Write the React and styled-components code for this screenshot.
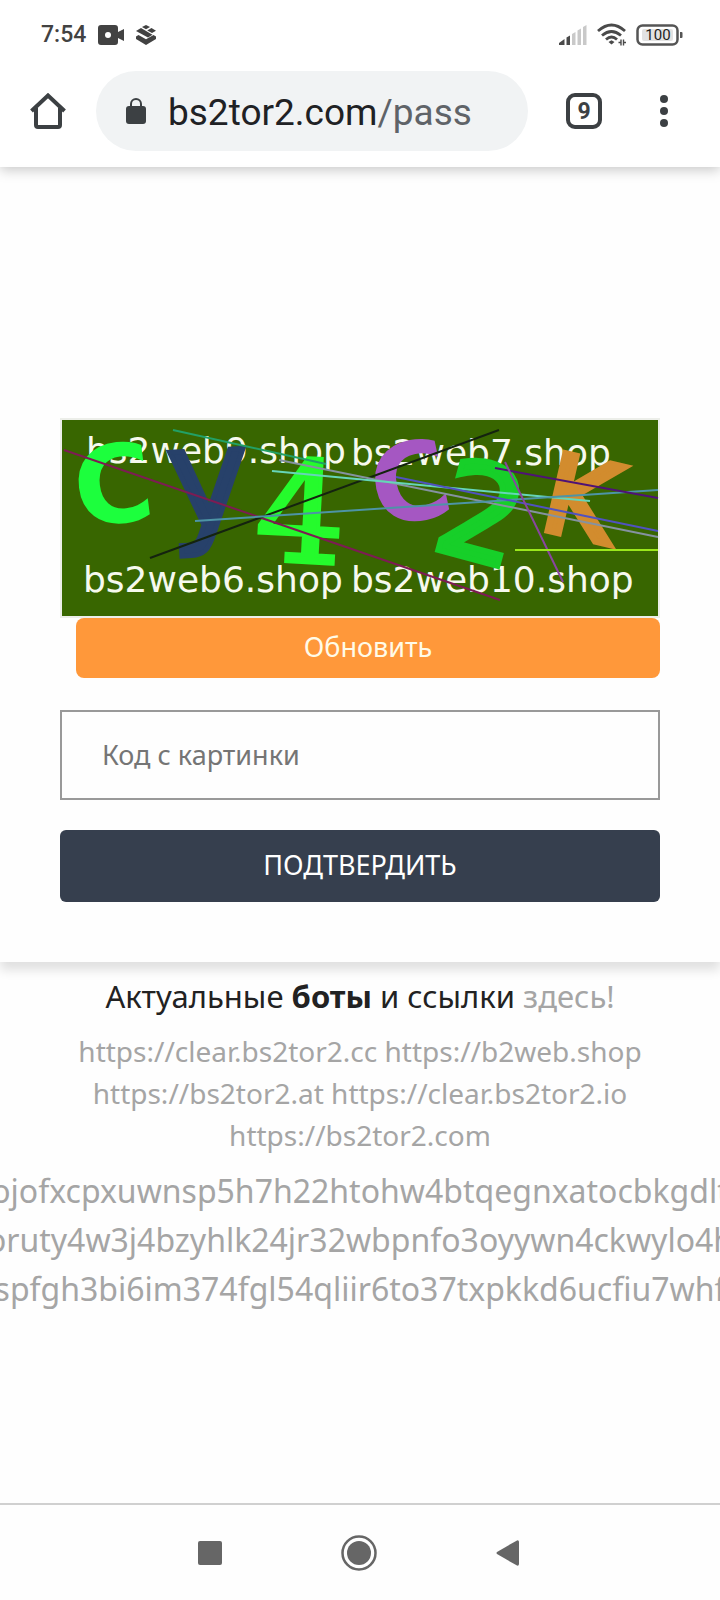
import React, { useState } from "react";
import styled, { createGlobalStyle } from "styled-components";

const GlobalStyle = createGlobalStyle`
	* {
		box-sizing: border-box;
	}

	body {
		margin: 0;
		background: #fefefe;
		color: #222;
		font-family: "Noto Sans", "Open Sans", sans-serif;
		overflow-x: hidden;
	}

	button {
		border: 0;
		padding: 0;
		background: none;
		font: inherit;
		cursor: pointer;
	}

	svg {
		display: block;
	}
`;

const Screen = styled.div`
	display: flex;
	flex-direction: column;
	min-height: 100vh;
	overflow: hidden;
`;

const Header = styled.header`
	background: #fff;
	box-shadow: 0 3px 12px rgba(0, 0, 0, 0.22);
	font-family: Roboto, sans-serif;
`;

const StatusBar = styled.div`
	display: flex;
	align-items: center;
	justify-content: space-between;
	height: 71px;
	padding: 0 37px 2px 41px;
	color: #424242;
`;

const StatusGroup = styled.div`
	display: flex;
	align-items: center;
	gap: ${(props) => props.$gap};
`;

const Clock = styled.time`
	font-size: 23px;
	font-weight: 500;
	line-height: 24px;
`;

const Toolbar = styled.div`
	display: flex;
	align-items: center;
	padding: 0 32px 16px 0;
	color: #3c4043;
`;

const ToolButton = styled.button`
	display: flex;
	align-items: center;
	justify-content: center;
	width: ${(props) => props.$width};
	height: ${(props) => props.$height || "80px"};
	color: inherit;
`;

const Address = styled.div`
	display: flex;
	flex: 1;
	align-items: center;
	gap: 22px;
	height: 80px;
	padding: 0 30px;
	border-radius: 40px;
	background: #f1f3f4;
	color: #202124;
	font-size: 37px;
	line-height: 44px;
	white-space: nowrap;
`;

const AddressText = styled.span`
	padding-top: 4px;
`;

const AddressPath = styled.span`
	color: #5f6368;
`;

const Card = styled.main`
	padding: 251px 60px 60px;
	box-shadow: 0 8px 10px rgba(0, 0, 0, 0.12);
`;

const Form = styled.form`
	display: flex;
	flex-direction: column;
`;

const CaptchaImage = styled.svg`
	width: 100%;
	height: auto;
`;

const RefreshButton = styled.button`
	height: 60px;
	margin-left: 16px;
	padding-bottom: 2px;
	border-radius: 8px;
	background: #ff983a;
	color: #fffbe8;
	font-size: 27px;
	line-height: 36px;
`;

const CodeInput = styled.input`
	width: 100%;
	height: 90px;
	margin: 32px 0 30px;
	padding: 0 40px 2px;
	border: 2px solid #999;
	border-radius: 0;
	background: transparent;
	color: #222;
	font-family: inherit;
	font-size: 27px;

	&::placeholder {
		color: #757575;
		opacity: 1;
	}
`;

const SubmitButton = styled.button`
	height: 72px;
	padding-bottom: 2px;
	border-radius: 6px;
	background: #363f4e;
	color: #fff;
	font-size: 27px;
	line-height: 36px;
	text-transform: uppercase;
`;

const Links = styled.section`
	text-align: center;
`;

const LinksTitle = styled.p`
	margin: 12px 0;
	font-size: 31px;
	line-height: 44px;
`;

const GreyLink = styled.a`
	color: #a5a5a5;
	text-decoration: none;
`;

const MirrorList = styled.p`
	margin: 0;
	padding: 0 60px;
	font-size: 28px;
	line-height: 42px;
`;

const OnionList = styled.div`
	display: flex;
	flex-direction: column;
	align-items: center;
	margin: 10px 0 60px;
	font-size: 32px;
	line-height: 49px;
	white-space: nowrap;
`;

const NavBar = styled.nav`
	display: flex;
	justify-content: center;
	height: 97px;
	margin-top: auto;
	padding-right: 3px;
	border-top: 2px solid #d0d0d0;
	color: #666;
`;

const mirrors = [
	"https://clear.bs2tor2.cc",
	"https://b2web.shop",
	"https://bs2tor2.at",
	"https://clear.bs2tor2.io",
	"https://bs2tor2.com",
];

const onions = [
	"ojofxcpxuwnsp5h7h22htohw4btqegnxatocbkgdlt",
	"oruty4w3j4bzyhlk24jr32wbpnfo3oyywn4ckwylo4h",
	"spfgh3bi6im374fgl54qliir6to37txpkkd6ucfiu7whf",
];

const captchaLetters = [
	{ char: "C", x: 53, y: 66, size: 108, turn: -7, base: 39, fill: "#1cff3d", weight: 700 },
	{ char: "y", x: 149, y: 85, size: 138, turn: -3, base: 23, fill: "#27416a", stroke: 5 },
	{ char: "4", x: 241, y: 93, size: 140, turn: 3, base: 51, fill: "#25fb2c", stroke: 4, serif: true },
	{ char: "C", x: 350, y: 64, size: 108, turn: -12, base: 39, fill: "#a557c2", weight: 700 },
	{ char: "2", x: 422, y: 94, size: 132, turn: 15, base: 48, fill: "#17cf29", stroke: 6 },
	{ char: "K", x: 521, y: 80, size: 108, turn: 13, base: 39, fill: "#d28c2e", stroke: 7 },
];

const captchaLines = [
	{ from: [4, 32], to: [440, 182], color: "#7d1c53" },
	{ from: [90, 140], to: [439, 12], color: "#14230f" },
	{ from: [113, 12], to: [266, 46], color: "#22a066" },
	{ from: [219, 42], to: [598, 119], color: "#8592a0" },
	{ from: [212, 53], to: [530, 83], color: "#66d5b8" },
	{ from: [135, 103], to: [598, 72], color: "#4d94a6" },
	{ from: [336, 59], to: [598, 113], color: "#5052c0" },
	{ from: [435, 50], to: [598, 80], color: "#4f1276" },
	{ from: [445, 44], to: [503, 164], color: "#8a45a0" },
	{ from: [455, 132], to: [598, 132], color: "#9be81c" },
];

const Captcha = () => (
	<CaptchaImage viewBox="0 0 600 200" role="img" aria-label="Код">
		<rect width="600" height="200" fill="#eceee9" />
		<rect x="2" y="2" width="596" height="196" fill="#386600" />
		<g fill="#f6f9ee" fontFamily="DejaVu Sans" fontSize="36">
			<text x="26" y="45">bs2web9.shop</text>
			<text x="291" y="47">bs2web7.shop</text>
			<text x="23" y="174">bs2web6.shop</text>
			<text x="291" y="174">bs2web10.shop</text>
		</g>
		{captchaLetters.map((letter, index) => (
			<text
				key={index}
				x="0"
				y={letter.base}
				transform={`translate(${letter.x} ${letter.y}) rotate(${letter.turn})`}
				textAnchor="middle"
				fontFamily={letter.serif ? "DejaVu Serif" : "DejaVu Sans"}
				fontSize={letter.size}
				fontWeight={letter.weight || 400}
				fill={letter.fill}
				stroke={letter.fill}
				strokeWidth={letter.stroke || 0}
			>
				{letter.char}
			</text>
		))}
		{captchaLines.map(({ from, to, color }) => (
			<line
				key={color}
				x1={from[0]}
				y1={from[1]}
				x2={to[0]}
				y2={to[1]}
				stroke={color}
				strokeWidth="2"
			/>
		))}
	</CaptchaImage>
);

const CameraIcon = () => (
	<svg width="26" height="20" viewBox="0 0 26 20" fill="currentColor">
		<path d="M3 0h14a3 3 0 0 1 3 3v4l6-3v12l-6-3v4a3 3 0 0 1-3 3H3a3 3 0 0 1-3-3V3a3 3 0 0 1 3-3z" />
		<circle cx="10" cy="10" r="3" fill="#fff" />
	</svg>
);

const LayersIcon = () => (
	<svg width="20" height="20" viewBox="0 0 20 20" fill="currentColor">
		<path d="M10 0l4 2-4 2.200-4-2.200zM15.500 3l4.500 2.800-4 2.200-4.800-2.600z" />
		<path d="M5 3l11.500 6.800-4.500 2.700L0 6z" />
		<path d="M0 11.500l2.500-1.500 7.500 4.300 7.500-4.300 2.500 1.500V14l-10 6-10-6z" />
	</svg>
);

const SignalIcon = () => (
	<svg width="28" height="20" viewBox="0 0 28 20">
		<path d="M0 18l5.500-4v6H0zM7.500 12.500l3.500-2V20H7.500z" fill="#4a4a4a" />
		<path d="M13 9l3.500-2v13H13zM18.500 5.500l3.500-2V20h-3.500zM24 2l3.500-2v20H24z" fill="#c9c9c9" />
	</svg>
);

const WifiIcon = () => (
	<svg width="29" height="23" viewBox="0 0 29 23" fill="none" stroke="#4a4a4a">
		<path d="M1 8Q14.500-4 28 8M5 12.500q9.500-8 19 0M9 16.500q5.500-5 11 0" strokeWidth="2.800" />
		<path d="M11.500 19l3-1.800 3 1.800-3 2.600z" fill="#4a4a4a" stroke="none" />
		<path d="M24 16.500v6M26.500 16.500v6M21.500 19.500H24M26.500 19.500H29" strokeWidth="1.400" />
	</svg>
);

const BatteryIcon = () => (
	<svg width="47" height="22" viewBox="0 0 47 22">
		<rect x="1.500" y="1.500" width="40" height="19" rx="5" fill="#fff" stroke="#555" strokeWidth="2.500" />
		<rect x="6" y="5" width="31" height="12" rx="2" fill="#e2e2e2" />
		<path d="M44 8h1.500a1 1 0 0 1 1 1v4a1 1 0 0 1-1 1H44z" fill="#555" />
		<text x="22" y="16" textAnchor="middle" fontSize="15" fontFamily="Roboto" fill="#222">
			100
		</text>
	</svg>
);

const HomeIcon = () => (
	<svg width="36" height="36" viewBox="0 0 36 36" fill="none" stroke="currentColor" strokeWidth="4">
		<path d="M6 15v17a2 2 0 0 0 2 2h20a2 2 0 0 0 2-2V15" />
		<path d="M1.500 18L18 2.500 34.500 18" />
	</svg>
);

const LockIcon = () => (
	<svg width="20" height="27" viewBox="0 0 20 27" color="#3c4043">
		<path d="M5 9V6a5 5 0 0 1 10 0v3" fill="none" stroke="currentColor" strokeWidth="2" />
		<rect y="8" width="20" height="18" rx="3" fill="currentColor" />
	</svg>
);

const TabsIcon = () => (
	<svg width="36" height="36" viewBox="0 0 36 36">
		<rect x="2" y="2" width="32" height="32" rx="7" fill="none" stroke="currentColor" strokeWidth="4" />
		<text x="18" y="26" textAnchor="middle" fontSize="23" fontWeight="700" fontFamily="Roboto" fill="currentColor">
			9
		</text>
	</svg>
);

const MenuIcon = () => (
	<svg width="8" height="34" viewBox="0 0 8 34" fill="currentColor">
		<circle cx="4" cy="5" r="4" />
		<circle cx="4" cy="17" r="4" />
		<circle cx="4" cy="29" r="4" />
	</svg>
);

const App = () => {
	const [code, setCode] = useState("");

	return (
		<React.Fragment>
			<GlobalStyle />
			<Screen>
				<Header>
					<StatusBar>
						<StatusGroup $gap="12px">
							<Clock>7:54</Clock>
							<CameraIcon />
							<LayersIcon />
						</StatusGroup>
						<StatusGroup $gap="10px">
							<SignalIcon />
							<WifiIcon />
							<BatteryIcon />
						</StatusGroup>
					</StatusBar>
					<Toolbar>
						<ToolButton $width="96px" aria-label="Home">
							<HomeIcon />
						</ToolButton>
						<Address>
							<LockIcon />
							<AddressText>
								bs2tor2.com<AddressPath>/pass</AddressPath>
							</AddressText>
						</Address>
						<ToolButton $width="112px" aria-label="Tabs">
							<TabsIcon />
						</ToolButton>
						<ToolButton $width="48px" aria-label="Menu">
							<MenuIcon />
						</ToolButton>
					</Toolbar>
				</Header>

				<Card>
					<Form onSubmit={(e) => e.preventDefault()}>
						<Captcha />
						<RefreshButton type="button">Обновить</RefreshButton>
						<CodeInput
							aria-label="Код с картинки"
							placeholder="Код с картинки"
							value={code}
							onChange={(e) => setCode(e.target.value)}
						/>
						<SubmitButton type="submit">Подтвердить</SubmitButton>
					</Form>
				</Card>

				<Links>
					<LinksTitle>
						Актуальные <b>боты</b> и ссылки <GreyLink href="#links">здесь!</GreyLink>
					</LinksTitle>
					<MirrorList>
						{mirrors.map((url) => (
							<React.Fragment key={url}>
								<GreyLink href="#mirror">{url}</GreyLink>{" "}
							</React.Fragment>
						))}
					</MirrorList>
					<OnionList>
						{onions.map((name) => (
							<GreyLink key={name} href="#onion">{name}</GreyLink>
						))}
					</OnionList>
				</Links>

				<NavBar>
					<ToolButton $width="149px" $height="95px" aria-label="Recent apps">
						<svg width="24" height="24" viewBox="0 0 24 24" fill="currentColor">
							<rect width="24" height="24" rx="2" />
						</svg>
					</ToolButton>
					<ToolButton $width="149px" $height="95px" aria-label="Home screen">
						<svg width="36" height="36" viewBox="0 0 36 36" fill="currentColor">
							<circle cx="18" cy="18" r="16.500" fill="none" stroke="currentColor" strokeWidth="2.500" />
							<circle cx="18" cy="18" r="12" />
						</svg>
					</ToolButton>
					<ToolButton $width="149px" $height="95px" aria-label="Back">
						<svg width="24" height="26" viewBox="0 0 24 26" fill="currentColor">
							<path d="M1 12L21 .400Q23 0 23 2v22q0 2-2 1.600L1 14q-1-1 0-2z" />
						</svg>
					</ToolButton>
				</NavBar>
			</Screen>
		</React.Fragment>
	);
};

export default App;
